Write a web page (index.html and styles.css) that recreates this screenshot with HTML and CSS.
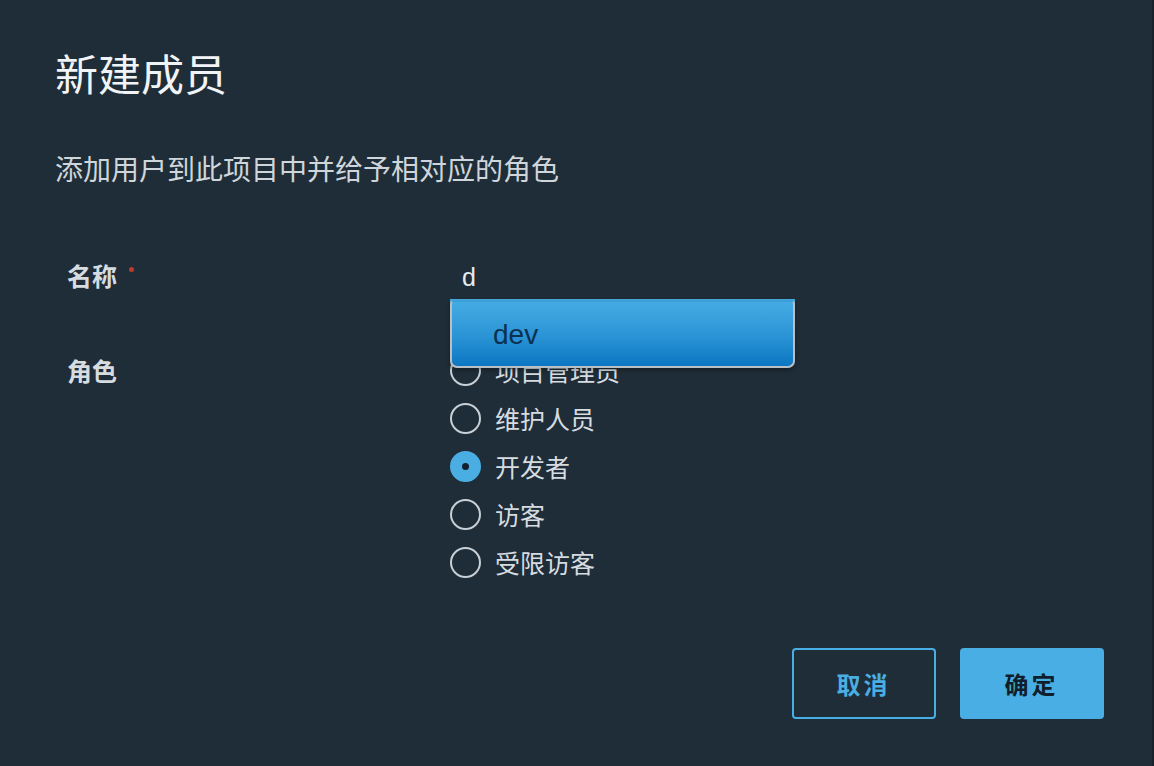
FILE: index.html
```html
<!DOCTYPE html>
<html lang="zh-CN">
<head>
<meta charset="utf-8">
<title>新建成员</title>
<link rel="stylesheet" href="styles.css">
</head>
<body>
<div class="dialog">
  <h1 class="title">新建成员</h1>
  <p class="subtitle">添加用户到此项目中并给予相对应的角色</p>
  <div class="form">
    <div class="label label-name">名称<span class="req"></span></div>
    <div class="field">
      <div class="input">d</div>
      <div class="dropdown"><div class="option">dev</div></div>
    </div>
    <div class="label label-role">角色</div>
    <div class="radios">
      <div class="radio-row"><span class="radio"></span><span class="radio-text">项目管理员</span></div>
      <div class="radio-row"><span class="radio"></span><span class="radio-text">维护人员</span></div>
      <div class="radio-row"><span class="radio checked"></span><span class="radio-text">开发者</span></div>
      <div class="radio-row"><span class="radio"></span><span class="radio-text">访客</span></div>
      <div class="radio-row"><span class="radio"></span><span class="radio-text">受限访客</span></div>
    </div>
  </div>
  <div class="footer">
    <button class="btn btn-outline">取消</button>
    <button class="btn btn-primary">确定</button>
  </div>
</div>
</body>
</html>
```
FILE: styles.css
```css
html, body {
  margin: 0;
  padding: 0;
  background: #1f2d38;
}
body {
  width: 1154px;
  height: 766px;
  overflow: hidden;
  font-family: "Noto Sans CJK SC", "Noto Sans", sans-serif;
}
.dialog {
  box-sizing: border-box;
  width: 1154px;
  height: 766px;
  padding: 46px 50px 0 55px;
  box-shadow: inset -2px 0 0 #17222b;
}
.title {
  margin: 0;
  font-size: 43px;
  line-height: 52px;
  font-weight: 400;
  color: #f1f4f6;
}
.subtitle {
  margin: 53px 0 0;
  font-size: 28px;
  line-height: 34px;
  color: #cfd6db;
}
.form {
  margin-top: 70px;
  display: grid;
  grid-template-columns: 395px 345px;
  row-gap: 44px;
}
.label {
  padding-left: 12px;
  font-size: 25px;
  font-weight: 700;
  color: #d6dce0;
}
.label-name {
  line-height: 40px;
}
.label-role {
  line-height: 48px;
}
.req {
  display: inline-block;
  width: 5px;
  height: 5px;
  border-radius: 50%;
  background: #c0392b;
  margin-left: 12px;
  vertical-align: 14px;
}
.field {
  position: relative;
}
.input {
  height: 44px;
  line-height: 44px;
  padding-left: 12px;
  font-family: "Liberation Sans", "Noto Sans", sans-serif;
  font-size: 25px;
  color: #e6ebee;
  border-bottom: 3px solid #49aee4;
}
.dropdown {
  position: absolute;
  left: 0;
  top: 45px;
  width: 345px;
  height: 68px;
  box-sizing: border-box;
  border: 2px solid #b9c0c5;
  border-top: 2px solid #3c9fd8;
  border-radius: 4px 4px 7px 7px;
  background: linear-gradient(#45abe3, #2a93d5 55%, #0b77c2);
  box-shadow: 0 2px 4px rgba(0, 0, 0, 0.35);
}
.option {
  padding-left: 41px;
  line-height: 66px;
  font-family: "Liberation Sans", "Noto Sans", sans-serif;
  font-size: 28px;
  color: #0c3150;
}
.radios {
  display: flex;
  flex-direction: column;
}
.radio-row {
  display: flex;
  align-items: center;
  height: 48px;
  gap: 14px;
}
.radio {
  box-sizing: border-box;
  width: 31px;
  height: 31px;
  border-radius: 50%;
  border: 2px solid #c8d0d5;
  display: flex;
  align-items: center;
  justify-content: center;
}
.radio.checked {
  background: #4aaee3;
  border-color: #4aaee3;
}
.radio.checked::after {
  content: "";
  width: 7px;
  height: 7px;
  border-radius: 50%;
  background: #11202c;
}
.radio-text {
  font-size: 25px;
  color: #d6dce0;
}
.footer {
  margin-top: 62px;
  display: flex;
  justify-content: flex-end;
  gap: 24px;
}
.btn {
  box-sizing: border-box;
  width: 144px;
  height: 71px;
  border-radius: 4px;
  font-family: "Noto Sans CJK SC", sans-serif;
  font-size: 24px;
  font-weight: 700;
  letter-spacing: 3px;
  padding-left: 5px;
  cursor: pointer;
}
.btn-outline {
  background: transparent;
  border: 2px solid #49aee4;
  color: #4aaee3;
}
.btn-primary {
  background: #49aee4;
  border: 2px solid #49aee4;
  color: #0f1e2a;
}
```
